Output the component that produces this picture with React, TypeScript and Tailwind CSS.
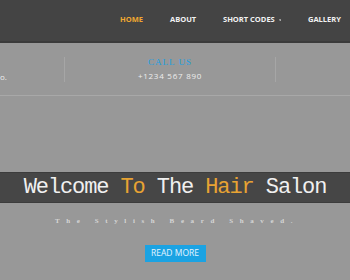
import React from "react";

export default function App() {
  return (
    <div className="w-[350px] h-[280px] overflow-hidden bg-[#989898] font-['Open_Sans',sans-serif]">
      <header className="h-[43px] bg-[#444444] border-b-2 border-[#3b3b3b] flex items-center">
        <nav className="flex items-center pl-[120px] pb-[1px] text-[7.5px] font-bold whitespace-nowrap leading-none">
          <span className="w-[22px] text-[#f0a830]">HOME</span>
          <span className="ml-[28px] w-[24px] text-[#f2f2f2]">ABOUT</span>
          <span className="ml-[29px] w-[58px] text-[#f2f2f2] flex items-center gap-[4px]">
            SHORT CODES
            <svg width="4" height="2.5" viewBox="0 0 4 2.5"><path d="M0 0h4L2 2.5z" fill="#f2f2f2" /></svg>
          </span>
          <span className="ml-[27px] w-[31px] text-[#f2f2f2]">GALLERY</span>
        </nav>
      </header>

      <div className="mt-[14px] flex h-[25px]">
        <div className="w-[64px] flex items-end pb-[1px] text-[8px] text-[#eeeeee] leading-none">o.</div>
        <div className="w-px bg-[#a6a6a6]" />
        <div className="w-[210px] flex flex-col items-center leading-none">
          <div className="text-[9px] text-[#1a9fe0] font-['Liberation_Serif',serif] tracking-[1px] h-[10px] flex items-center">CALL US</div>
          <div className="mt-[4px] text-[8px] text-[#eeeeee] tracking-[0.75px] h-[10px] flex items-center">+1234 567 890</div>
        </div>
        <div className="w-px bg-[#a6a6a6]" />
        <div className="flex-1" />
      </div>
      <div className="mt-[13px] h-px bg-[#a8a8a8]" />

      <div className="mt-[76px] h-[31px] bg-[#464646] border-y border-[#3c3c3c] flex items-center justify-center font-['Liberation_Mono',monospace] text-[22px] tracking-[-1.1px] text-[#f0f0f0] whitespace-nowrap leading-none">
        <span>
          Welcome <span className="text-[#e8a333]">To</span> The <span className="text-[#e8a333]">Hair</span> Salon
        </span>
      </div>

      <div className="mt-[13px] h-[10px] flex items-center justify-center text-[7px] text-[#d6d6d6] tracking-[6.6px] font-['Liberation_Serif',serif] font-bold whitespace-nowrap leading-none pl-[4px]">
        The Stylish Beard Shaved.
      </div>

      <div className="mt-[19px] flex justify-center">
        <div className="w-[61px] h-[17px] bg-[#1ba3e3] flex items-center justify-center text-[8.5px] text-[#e6f4ff] leading-none">
          READ MORE
        </div>
      </div>
    </div>
  );
}
